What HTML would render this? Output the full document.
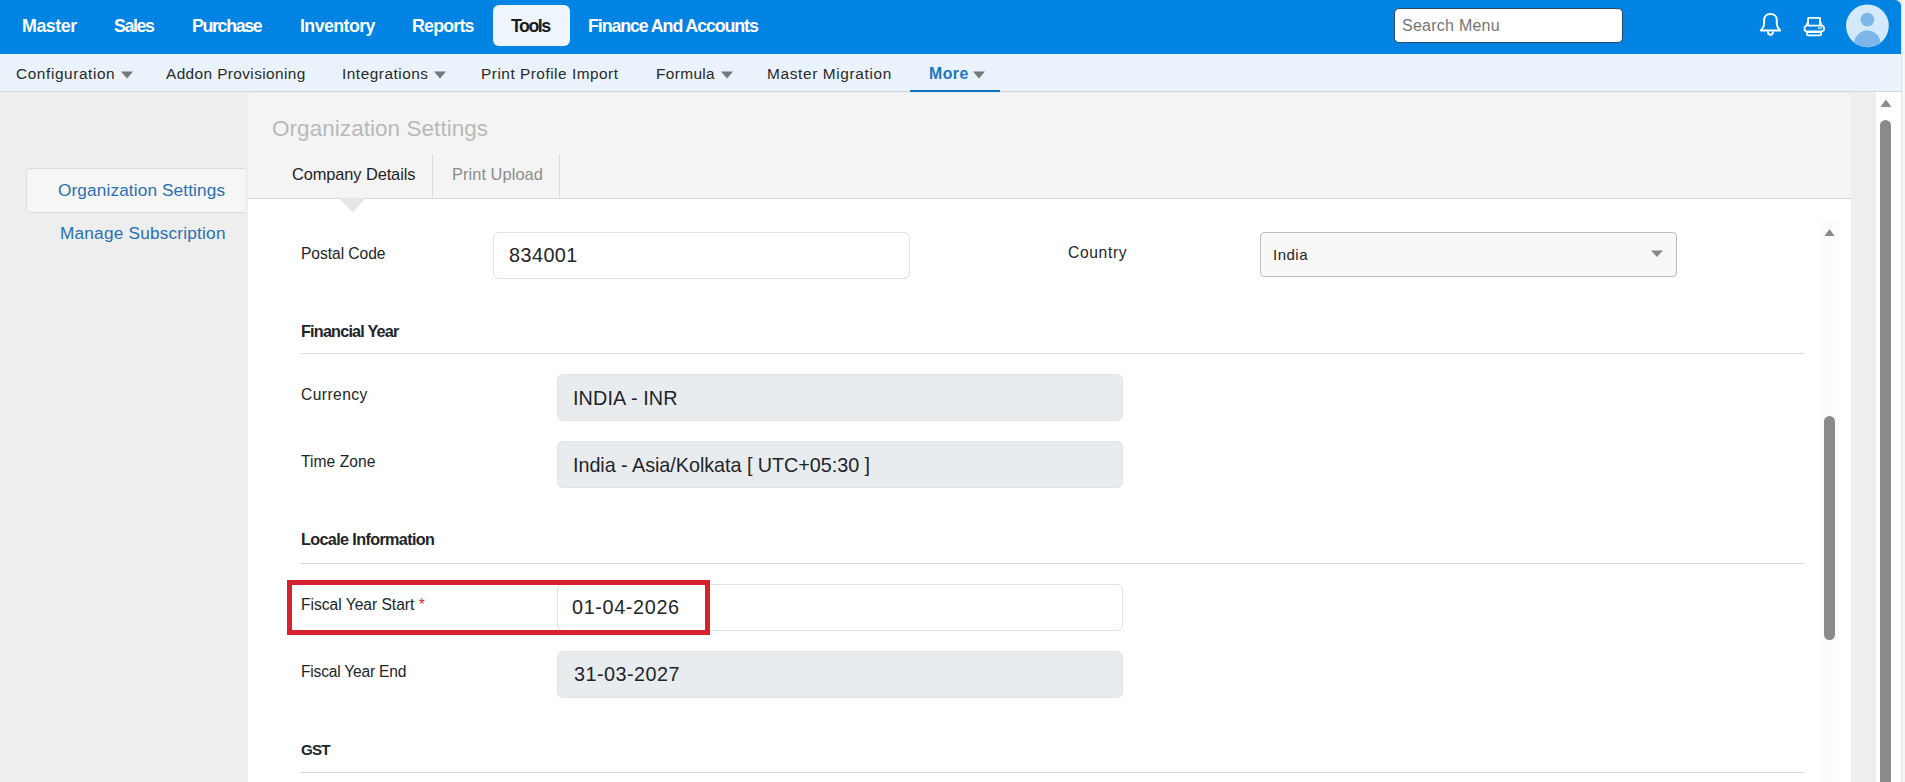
<!DOCTYPE html>
<html><head><meta charset="utf-8"><title>Organization Settings</title>
<style>
html,body{margin:0;padding:0;width:1905px;height:782px;overflow:hidden;background:#eeeeee;}
body{position:relative;font-family:"Liberation Sans", sans-serif;}
.t{position:absolute;white-space:nowrap;}
.r{position:absolute;}
</style></head><body>
<div class="r" style="left:0px;top:0px;width:1905px;height:782px;background:#eeeeee;"></div>
<div class="r" style="left:0px;top:0px;width:1901px;height:54px;background:#0083e2;border-top-right-radius:6px;"></div>
<div class="r" style="left:493px;top:5px;width:77px;height:41px;background:#eef5fc;border-radius:6px;"></div>
<div class="r" style="left:1394px;top:8px;width:229px;height:35px;background:#fff;border:1px solid #2b4a66;border-radius:5px;box-sizing:border-box;"></div>
<svg class="r" style="left:1755px;top:8px" width="32" height="32" viewBox="0 0 32 32">
<path d="M5.9 22.5 C7.6 20.5 9.1 18.8 9.1 16 L9.1 11.8 C9.1 8 12 5.9 15.45 5.9 C18.9 5.9 21.8 8 21.8 11.8 L21.8 16 C21.8 18.8 23.3 20.5 25 22.5 Z" fill="none" stroke="#fff" stroke-width="2" stroke-linejoin="round"/>
<path d="M12.9 23.4 C12.9 25.7 14 26.8 15.45 26.8 C16.9 26.8 18 25.7 18 23.4" fill="none" stroke="#fff" stroke-width="1.9"/>
</svg>
<svg class="r" style="left:1798px;top:8px" width="32" height="32" viewBox="0 0 32 32">
<path d="M10.1 17 L10.1 10.3 Q10.1 9.9 10.5 9.9 L21.6 9.9 Q22 9.9 22 10.3 L22 17" fill="none" stroke="#fff" stroke-width="1.8"/>
<path d="M10.1 13.2 L8.4 17.4 M22 13.2 L23.7 17.4" fill="none" stroke="#fff" stroke-width="1.6"/>
<path d="M8.2 17.6 L24.3 17.6 L25.9 19.2 L25.9 22.2 L24.3 23.3 L7.9 23.3 L6.6 22.2 L6.6 19.2 Z" fill="none" stroke="#fff" stroke-width="1.8" stroke-linejoin="round"/>
<rect x="8.9" y="24.1" width="14.3" height="3.3" rx="1.3" fill="none" stroke="#fff" stroke-width="1.8"/>
<rect x="20.1" y="19.3" width="1.5" height="1.6" fill="#fff"/><rect x="22.1" y="19.3" width="1.5" height="1.6" fill="#fff"/>
</svg>
<svg class="r" style="left:1845px;top:4px" width="44" height="44" viewBox="0 0 44 44">
<defs><clipPath id="av"><circle cx="22.4" cy="21.8" r="21.4"/></clipPath></defs>
<circle cx="22.4" cy="21.8" r="21.4" fill="#d2eafb"/>
<g clip-path="url(#av)"><circle cx="22.4" cy="15.6" r="6.8" fill="#7db7ea"/>
<ellipse cx="22.4" cy="40" rx="13.4" ry="13.6" fill="#7db7ea"/></g>
</svg>
<div class="r" style="left:0px;top:54px;width:1901px;height:37px;background:#eaf3fb;"></div>
<div class="r" style="left:0px;top:91px;width:1901px;height:1px;background:#d3d6d9;"></div>
<svg class="r" style="left:121px;top:71px" width="12" height="8" viewBox="0 0 12 8"><path d="M0 0.5 L12 0.5 L6 7.5 Z" fill="#777"/></svg>
<svg class="r" style="left:434.2px;top:71px" width="12" height="8" viewBox="0 0 12 8"><path d="M0 0.5 L12 0.5 L6 7.5 Z" fill="#777"/></svg>
<svg class="r" style="left:720.6px;top:71px" width="12" height="8" viewBox="0 0 12 8"><path d="M0 0.5 L12 0.5 L6 7.5 Z" fill="#777"/></svg>
<svg class="r" style="left:973px;top:71px" width="12" height="8" viewBox="0 0 12 8"><path d="M0 0.5 L12 0.5 L6 7.5 Z" fill="#777"/></svg>
<div class="r" style="left:910px;top:90px;width:90px;height:2px;background:#1170b8;"></div>
<div class="r" style="left:1876px;top:92px;width:25px;height:690px;background:#ffffff;"></div>
<div class="r" style="left:1902px;top:0px;width:3px;height:782px;background:#f5f5f5;"></div>
<div class="r" style="left:1901px;top:0px;width:1px;height:782px;background:#e0e2e4;"></div>
<svg class="r" style="left:1880px;top:99px" width="12" height="9" viewBox="0 0 12 9"><path d="M1.2 7.6 L10.6 7.6 L5.9 1.2 Z" fill="#8a8a8a" stroke="#8a8a8a" stroke-width="1" stroke-linejoin="round"/></svg>
<div class="r" style="left:1880px;top:120px;width:11px;height:680px;background:#8a8a8a;border-radius:5.5px;"></div>
<div class="r" style="left:26px;top:168px;width:219px;height:45px;background:#f6f6f6;border:1px solid #dcdcdc;border-right:none;border-radius:5px 0 0 5px;box-sizing:border-box;"></div>
<div class="r" style="left:248px;top:93px;width:1603px;height:689px;background:#ffffff;border-top-left-radius:6px;border-top-right-radius:6px;"></div>
<div class="r" style="left:248px;top:93px;width:1603px;height:105px;background:#f4f4f4;border-top-left-radius:6px;border-top-right-radius:6px;"></div>
<div class="r" style="left:248px;top:198px;width:1603px;height:1px;background:#d3d7db;"></div>
<div class="r" style="left:432px;top:154px;width:1px;height:43px;background:#dcdcdc;"></div>
<div class="r" style="left:559px;top:154px;width:1px;height:43px;background:#dcdcdc;"></div>
<svg class="r" style="left:338px;top:197px" width="29" height="16" viewBox="0 0 29 16"><path d="M0.5 0.5 L28.5 0.5 L14.5 15.5 Z" fill="#e6e6e6"/></svg>
<div class="r" style="left:1820px;top:221px;width:19px;height:561px;background:#fcfcfc;"></div>
<svg class="r" style="left:1824px;top:228px" width="11" height="9" viewBox="0 0 11 9"><path d="M0.5 8 L10.5 8 L5.5 1 Z" fill="#8a8a8a"/></svg>
<div class="r" style="left:1824px;top:416px;width:11px;height:224px;background:#8a8a8a;border-radius:5.5px;"></div>
<div class="r" style="left:493px;top:232px;width:417px;height:47px;background:#fff;border:1px solid #dcdfe3;border-radius:6px;box-sizing:border-box;"></div>
<div class="r" style="left:1260px;top:232px;width:417px;height:45px;background:#f8f8f7;border:1px solid #bdbdbd;border-radius:4px;box-sizing:border-box;"></div>
<svg class="r" style="left:1651px;top:250px" width="12" height="8" viewBox="0 0 12 8"><path d="M0 0.5 L12 0.5 L6 7 Z" fill="#888"/></svg>
<div class="r" style="left:301px;top:353px;width:1504px;height:1px;background:#dcdcdc;"></div>
<div class="r" style="left:557px;top:374px;width:566px;height:47px;background:#e9ecef;border:1px solid #e1e4e7;border-radius:6px;box-sizing:border-box;"></div>
<div class="r" style="left:557px;top:441px;width:566px;height:47px;background:#e9ecef;border:1px solid #e1e4e7;border-radius:6px;box-sizing:border-box;"></div>
<div class="r" style="left:301px;top:563px;width:1504px;height:1px;background:#dcdcdc;"></div>
<div class="r" style="left:557px;top:584px;width:566px;height:47px;background:#fff;border:1px solid #dcdfe3;border-radius:6px;box-sizing:border-box;"></div>
<div class="r" style="left:557px;top:651px;width:566px;height:47px;background:#e9ecef;border:1px solid #e1e4e7;border-radius:6px;box-sizing:border-box;"></div>
<div class="r" style="left:301px;top:772px;width:1504px;height:1px;background:#dcdcdc;"></div>
<div class="t" style="left:22.00px;top:15.85px;font-size:17.8px;line-height:21.36px;color:#ffffff;font-weight:bold;letter-spacing:-0.42px;">Master</div>
<div class="t" style="left:114.00px;top:15.85px;font-size:17.8px;line-height:21.36px;color:#ffffff;font-weight:bold;letter-spacing:-1.425px;">Sales</div>
<div class="t" style="left:192.00px;top:15.85px;font-size:17.8px;line-height:21.36px;color:#ffffff;font-weight:bold;letter-spacing:-1.344px;">Purchase</div>
<div class="t" style="left:300.00px;top:15.85px;font-size:17.8px;line-height:21.36px;color:#ffffff;font-weight:bold;letter-spacing:-0.575px;">Inventory</div>
<div class="t" style="left:412.00px;top:15.85px;font-size:17.8px;line-height:21.36px;color:#ffffff;font-weight:bold;letter-spacing:-0.798px;">Reports</div>
<div class="t" style="left:511.00px;top:15.85px;font-size:17.8px;line-height:21.36px;color:#1b1b1b;font-weight:bold;letter-spacing:-1.5px;">Tools</div>
<div class="t" style="left:588.00px;top:16.25px;font-size:17.8px;line-height:21.36px;color:#ffffff;font-weight:bold;letter-spacing:-1.079px;">Finance And Accounts</div>
<div class="t" style="left:1402.00px;top:15.65px;font-size:16px;line-height:19.20px;color:#757575;font-weight:normal;letter-spacing:0.25px;">Search Menu</div>
<div class="t" style="left:16.00px;top:64.62px;font-size:15.4px;line-height:18.48px;color:#2a2a2a;font-weight:normal;letter-spacing:0.592px;">Configuration</div>
<div class="t" style="left:166.00px;top:64.62px;font-size:15.4px;line-height:18.48px;color:#2a2a2a;font-weight:normal;letter-spacing:0.391px;">Addon Provisioning</div>
<div class="t" style="left:342.00px;top:64.62px;font-size:15.4px;line-height:18.48px;color:#2a2a2a;font-weight:normal;letter-spacing:0.507px;">Integrations</div>
<div class="t" style="left:481.00px;top:64.62px;font-size:15.4px;line-height:18.48px;color:#2a2a2a;font-weight:normal;letter-spacing:0.504px;">Print Profile Import</div>
<div class="t" style="left:656.00px;top:64.62px;font-size:15.4px;line-height:18.48px;color:#2a2a2a;font-weight:normal;letter-spacing:0.368px;">Formula</div>
<div class="t" style="left:767.00px;top:64.62px;font-size:15.4px;line-height:18.48px;color:#2a2a2a;font-weight:normal;letter-spacing:0.646px;">Master Migration</div>
<div class="t" style="left:929.00px;top:64.84px;font-size:15.8px;line-height:18.96px;color:#1a76c0;font-weight:bold;letter-spacing:0.533px;">More</div>
<div class="t" style="left:58.00px;top:179.92px;font-size:17.2px;line-height:20.64px;color:#2a6fb3;font-weight:normal;letter-spacing:0.135px;">Organization Settings</div>
<div class="t" style="left:60.00px;top:223.12px;font-size:17.2px;line-height:20.64px;color:#2a6fb3;font-weight:normal;letter-spacing:0.222px;">Manage Subscription</div>
<div class="t" style="left:272.00px;top:114.90px;font-size:22.5px;line-height:27.00px;color:#b9b9b9;font-weight:normal;letter-spacing:0.05px;">Organization Settings</div>
<div class="t" style="left:292.00px;top:165.07px;font-size:16.4px;line-height:19.68px;color:#1f1f1f;font-weight:normal;letter-spacing:-0.099px;">Company Details</div>
<div class="t" style="left:452.00px;top:165.07px;font-size:16.4px;line-height:19.68px;color:#8c8c8c;font-weight:normal;letter-spacing:0.061px;">Print Upload</div>
<div class="t" style="left:301.00px;top:244.73px;font-size:15.6px;line-height:18.72px;color:#212529;font-weight:normal;letter-spacing:-0.05px;">Postal Code</div>
<div class="t" style="left:509.00px;top:244.05px;font-size:19.8px;line-height:23.76px;color:#212529;font-weight:normal;letter-spacing:0.46px;">834001</div>
<div class="t" style="left:1068.00px;top:244.43px;font-size:15.6px;line-height:18.72px;color:#212529;font-weight:normal;letter-spacing:0.653px;">Country</div>
<div class="t" style="left:1273.00px;top:245.70px;font-size:15px;line-height:18.00px;color:#212529;font-weight:normal;letter-spacing:0.5px;">India</div>
<div class="t" style="left:301.00px;top:322.26px;font-size:16.2px;line-height:19.44px;color:#212529;font-weight:bold;letter-spacing:-0.793px;">Financial Year</div>
<div class="t" style="left:301.00px;top:386.43px;font-size:15.6px;line-height:18.72px;color:#212529;font-weight:normal;letter-spacing:0.429px;">Currency</div>
<div class="t" style="left:573.00px;top:387.45px;font-size:19.8px;line-height:23.76px;color:#212529;font-weight:normal;letter-spacing:0.12px;">INDIA - INR</div>
<div class="t" style="left:301.00px;top:453.03px;font-size:15.6px;line-height:18.72px;color:#212529;font-weight:normal;letter-spacing:0.06px;">Time Zone</div>
<div class="t" style="left:573.00px;top:454.35px;font-size:19.8px;line-height:23.76px;color:#212529;font-weight:normal;letter-spacing:-0.045px;">India - Asia/Kolkata [ UTC+05:30 ]</div>
<div class="t" style="left:301.00px;top:530.36px;font-size:16.2px;line-height:19.44px;color:#212529;font-weight:bold;letter-spacing:-0.642px;">Locale Information</div>
<div class="t" style="left:301.00px;top:596.23px;font-size:15.6px;line-height:18.72px;color:#212529;font-weight:normal;letter-spacing:-0.011px;">Fiscal Year Start <span style="color:#d0312d">*</span></div>
<div class="t" style="left:572.00px;top:596.05px;font-size:19.8px;line-height:23.76px;color:#212529;font-weight:normal;letter-spacing:0.655px;">01-04-2026</div>
<div class="t" style="left:301.00px;top:663.23px;font-size:15.6px;line-height:18.72px;color:#212529;font-weight:normal;letter-spacing:-0.209px;">Fiscal Year End</div>
<div class="t" style="left:574.00px;top:663.45px;font-size:19.8px;line-height:23.76px;color:#212529;font-weight:normal;letter-spacing:0.468px;">31-03-2027</div>
<div class="t" style="left:301.00px;top:741.11px;font-size:15.2px;line-height:18.24px;color:#212529;font-weight:bold;letter-spacing:-0.9px;">GST</div>
<div class="r" style="left:287px;top:580px;width:423px;height:55px;border:5px solid #d7232f;box-sizing:border-box;"></div>
</body></html>
